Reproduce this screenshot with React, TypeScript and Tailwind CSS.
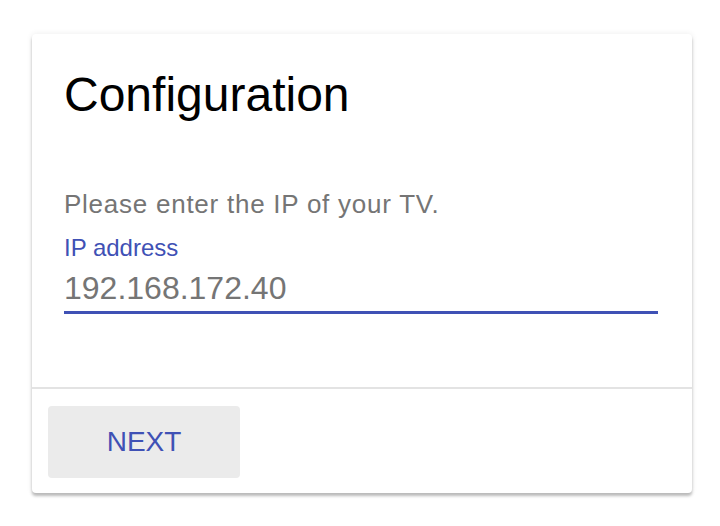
export default function App() {
  return (
    <div className="w-[720px] h-[526px] bg-white pt-[34px] pl-[32px] font-['Liberation_Sans',Arial,sans-serif]">
      <div className="w-[660px] h-[459px] bg-white rounded-[4px] shadow-[0_3px_3px_rgba(0,0,0,0.25),0_0_6px_rgba(0,0,0,0.08)] flex flex-col">
        {/* Title */}
        <div className="px-[32px] pt-[33px] shrink-0">
          <h1 className="text-[48px] leading-[56px] text-black">Configuration</h1>
        </div>

        {/* Body */}
        <div className="px-[32px] pt-[66px] h-[264px] shrink-0">
          <p className="text-[26px] leading-[30px] tracking-[0.75px] text-[#757575]">Please enter the IP of your TV.</p>
          <label className="block mt-[16px] text-[24px] leading-[26px] text-[#3f51b5]">IP address</label>
          <input
            className="block w-[594px] mt-[9px] pb-[5px] text-[32px] leading-[36px] text-[#757575] outline-none border-b-[3px] border-[#3f51b5]"
            defaultValue="192.168.172.40"
          />
        </div>

        {/* Actions */}
        <div className="border-t-2 border-[#e3e3e3] flex-1 px-[16px] pt-[17px]">
          <button className="w-[192px] h-[72px] bg-[#ebebeb] rounded-[4px] text-[28px] leading-none text-[#3f51b5] font-medium">NEXT</button>
        </div>
      </div>
    </div>
  );
}
